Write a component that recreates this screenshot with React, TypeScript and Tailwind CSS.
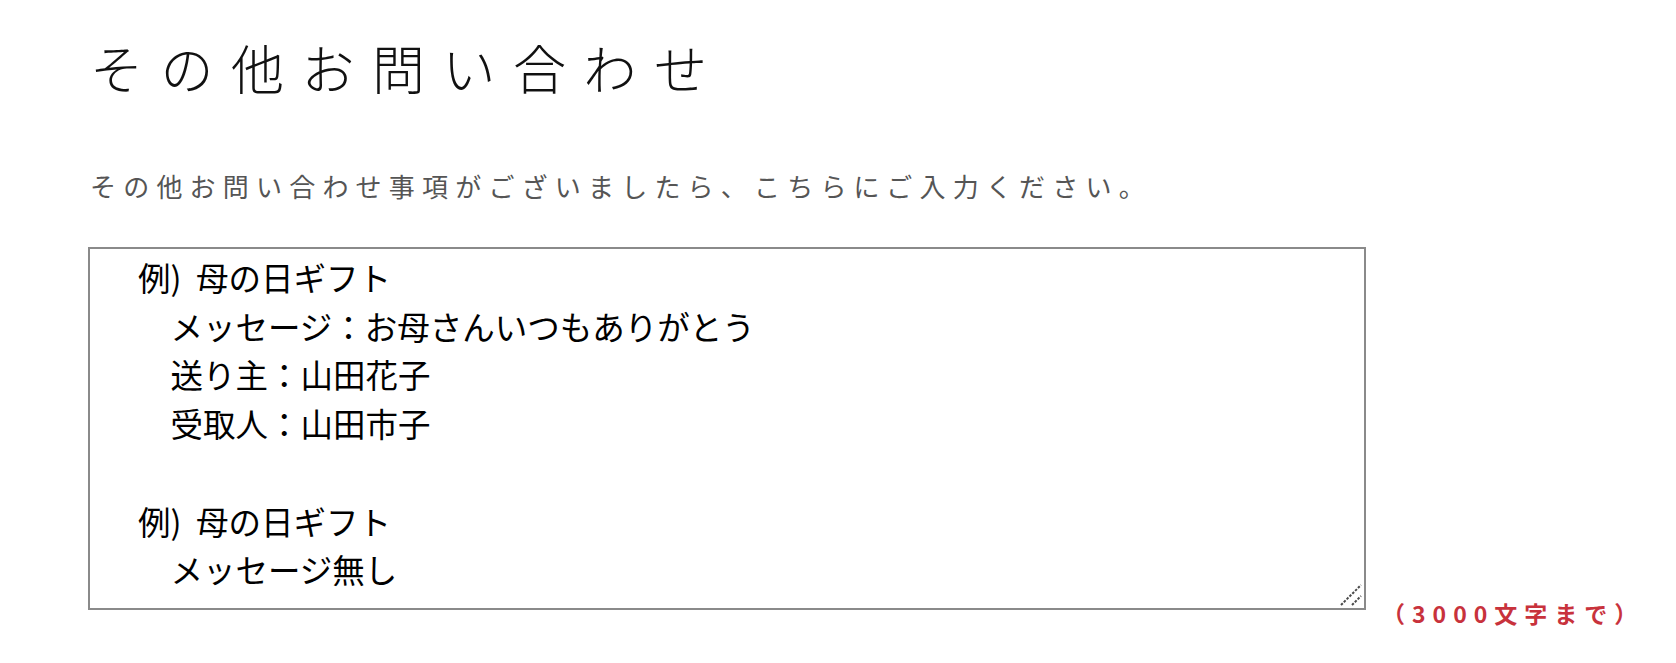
export default function App() {
  const sample = [
    '例)  母の日ギフト',
    '　メッセージ：お母さんいつもありがとう',
    '　送り主：山田花子',
    '　受取人：山田市子',
    '',
    '例)  母の日ギフト',
    '　メッセージ無し',
  ].join('\n');

  return (
    <div
      className="min-h-screen w-full bg-white pl-[88px] pt-[37px]"
      style={{ fontFamily: '"Noto Sans CJK JP", "Noto Sans", sans-serif' }}
    >
      {/* Heading */}
      <h2 className="pl-[2px] text-[53px] font-light leading-[60px] tracking-[17.5px] text-[#111]">
        その他お問い合わせ
      </h2>

      {/* Lead text */}
      <p className="mt-[73px] pl-[2px] text-[26px] leading-[32px] tracking-[7.2px] text-[#555]">
        その他お問い合わせ事項がございましたら、こちらにご入力ください。
      </p>

      {/* Textarea + counter */}
      <div className="mt-[45px] flex items-end">
        <div className="relative">
          <textarea
            defaultValue={sample}
            className="block h-[363px] w-[1278px] resize-none border-2 border-[#8a8a8a] bg-white pl-[48px] pt-[4px] text-[32.5px] leading-[48.7px] text-black outline-none"
            style={{ fontFamily: '"Noto Sans CJK JP", sans-serif' }}
          />
          {/* resize grip */}
          <svg
            className="pointer-events-none absolute bottom-[3px] right-[3px] h-[24px] w-[24px]"
            viewBox="0 0 24 24"
            fill="none"
          >
            <path d="M2 22 L22 2" stroke="#4a4a4a" strokeWidth="2" strokeDasharray="2.5 1.5" />
            <path d="M13 22 L22 13" stroke="#4a4a4a" strokeWidth="2" strokeDasharray="2.5 1.5" />
          </svg>
        </div>
        <span className="mb-[-18px] ml-[16px] text-[23px] font-semibold leading-[30px] tracking-[7px] text-[#c8323c]">
          （3000文字まで）
        </span>
      </div>
    </div>
  );
}
